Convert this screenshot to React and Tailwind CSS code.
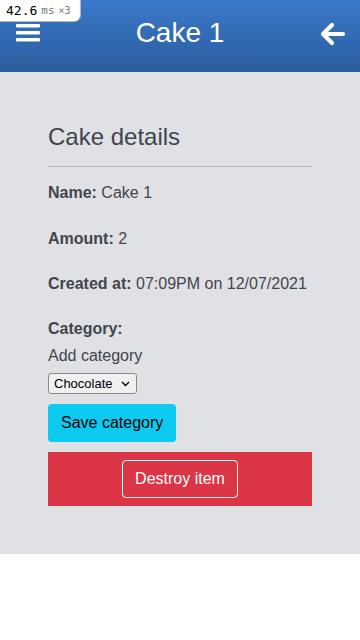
export default function App() {
  return (
    <div className="w-[360px] min-h-[640px] bg-white relative" style={{ fontFamily: '"Liberation Sans", Arial, sans-serif' }}>
      <div className="absolute left-0 top-0 z-10 h-[22px] w-[81px] bg-white border border-t-0 border-l-0 border-[#b9b9b9] rounded-br-[7px] flex items-center pl-[6px] gap-[4px]" style={{ fontFamily: '"DejaVu Sans Mono", monospace' }}>
        <span className="text-[13px] text-black leading-none">42.6</span>
        <span className="text-[11px] text-[#777] leading-none">ms</span>
        <span className="text-[10px] text-[#777] leading-none">×3</span>
      </div>
      <header className="h-[72px] bg-gradient-to-b from-[#3a79ca] to-[#2b5d9e] flex items-center justify-between px-4 text-white">
        <svg width="24" height="20" viewBox="0 0 24 20" className="mt-[-4px]">
          <rect x="0" y="0" width="24" height="3.6" rx="1" fill="white" />
          <rect x="0" y="7" width="24" height="3.6" rx="1" fill="white" />
          <rect x="0" y="14" width="24" height="3.6" rx="1" fill="white" />
        </svg>
        <h1 className="text-[28px] leading-none mt-[-6px]">Cake 1</h1>
        <svg width="26" height="24" viewBox="0 0 26 24" className="mt-[-4px] mr-[-2px]">
          <path d="M12 3 L3 12 L12 21 M3 12 H23" stroke="white" strokeWidth="4.2" strokeLinecap="round" strokeLinejoin="round" fill="none" />
        </svg>
      </header>
      <main className="bg-[#e0e1e5] px-12 pt-[50px] pb-[48px] text-[#41464d] text-base">
        <h2 className="text-[24px] leading-[29px] text-[#3e454c]">Cake details</h2>
        <hr className="mt-[15px] mb-[14px] border-0 border-t border-[#b4b7bc]" />
        <p className="leading-6 mb-[22px]"><b>Name:</b> Cake 1</p>
        <p className="leading-6 mb-[21px]"><b>Amount:</b> 2</p>
        <p className="leading-6 mb-[21px]"><b>Created at:</b> 07:09PM on 12/07/2021</p>
        <p className="leading-6 mb-[3px]"><b>Category:</b></p>
        <p className="leading-6 mb-[3px]">Add category</p>
        <div className="mb-[9px]">
          <div className="inline-flex items-center h-[21px] w-[89px] border border-[#8a8a8a] rounded-[3px] bg-[#f0f0f0] pl-[5px] pr-[6px] justify-between text-[13px] text-black">
            <span>Chocolate</span>
            <svg width="9" height="6" viewBox="0 0 9 6"><path d="M1 1 L4.5 4.5 L8 1" stroke="black" strokeWidth="1.4" fill="none" /></svg>
          </div>
        </div>
        <button className="h-[38px] px-[13px] bg-[#0dcaf0] rounded-[4px] text-black text-base mb-[10px]">Save category</button>
        <div className="bg-[#dc3545] h-[54px] flex items-center justify-center">
          <button className="h-[38px] px-[12px] border border-white rounded-[4px] text-white text-base">Destroy item</button>
        </div>
      </main>
    </div>
  );
}
